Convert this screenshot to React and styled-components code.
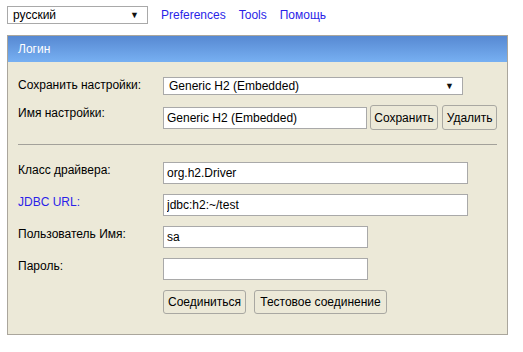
import React from 'react';
import styled, { createGlobalStyle } from 'styled-components';

const GlobalStyle = createGlobalStyle`
    body {
        margin: 0;
        background: #ffffff;
        font-family: "Liberation Sans", Arial, sans-serif;
        font-size: 12px;
        color: #000;
    }
`;

export default function App() {
    return (
        <>
            <GlobalStyle />
            <Page>
                <TopBar>
                    <SelectBox width="141px" height="18px">
                        <span>русский</span>
                        <Caret>▼</Caret>
                    </SelectBox>
                    <Links>
                        <Link>Preferences</Link>
                        <Link>Tools</Link>
                        <Link>Помощь</Link>
                    </Links>
                </TopBar>
                <Panel>
                    <Header>Логин</Header>
                    <Body>
                        <Row>
                            <Label>Сохранить настройки:</Label>
                            <SelectBox width="300px" height="18px">
                                <span>Generic H2 (Embedded)</span>
                                <Caret>▼</Caret>
                            </SelectBox>
                        </Row>
                        <Row top="10px">
                            <Label>Имя настройки:</Label>
                            <Input width="205px" shift="2px" defaultValue="Generic H2 (Embedded)" />
                            <Button left="3px" width="69px">Сохранить</Button>
                            <Button left="4px" width="55px">Удалить</Button>
                        </Row>
                        <Divider />
                        <Row>
                            <Label>Класс драйвера:</Label>
                            <Input width="305px" defaultValue="org.h2.Driver" />
                        </Row>
                        <Row top="10px">
                            <Label link>JDBC URL:</Label>
                            <Input width="305px" defaultValue="jdbc:h2:~/test" />
                        </Row>
                        <Row top="10px">
                            <Label>Пользователь Имя:</Label>
                            <Input width="205px" defaultValue="sa" />
                        </Row>
                        <Row top="10px">
                            <Label>Пароль:</Label>
                            <Input width="205px" type="password" defaultValue="" />
                        </Row>
                        <Row top="10px">
                            <Label />
                            <Button width="83px" tall>Соединиться</Button>
                            <Button left="8px" width="133px" tall>Тестовое соединение</Button>
                        </Row>
                    </Body>
                </Panel>
            </Page>
        </>
    );
}

const Page = styled.div`
    padding: 6px 7px 0;
    width: 501px;
`;

const TopBar = styled.div`
    display: flex;
    align-items: center;
    height: 18px;
`;

const Links = styled.div`
    display: flex;
    gap: 13px;
    margin-left: 13px;
`;

const Link = styled.a`
    color: #2b1fe8;
    text-decoration: none;
    cursor: pointer;
`;

const SelectBox = styled.div`
    box-sizing: border-box;
    width: ${p => p.width};
    height: ${p => p.height};
    display: flex;
    align-items: center;
    justify-content: space-between;
    padding: 0 8px 0 5px;
    background: #fff;
    border: 1px solid #a9a9a9;
`;

const Caret = styled.span`
    font-size: 9px;
    line-height: 1;
    color: #111;
`;

const Panel = styled.div`
    margin-top: 11px;
    border: 1px solid #aaa69c;
    background: #ece9d8;
`;

const Header = styled.div`
    height: 26px;
    line-height: 26px;
    padding-left: 10px;
    color: #fff;
    background: linear-gradient(to bottom, #5789d2, #77b0f2);
`;

const Body = styled.div`
    padding: 15px 10px 20px;
`;

const Row = styled.div`
    display: flex;
    align-items: flex-start;
    margin-top: ${p => p.top || '0'};
`;

const Label = styled.div`
    flex: 0 0 145px;
    padding-top: 1px;
    line-height: 14px;
    color: ${p => (p.link ? '#2b1fe8' : '#000')};
`;

const Input = styled.input`
    box-sizing: border-box;
    width: ${p => p.width};
    height: 22px;
    margin: ${p => p.shift || '0'} 0 0;
    padding: 0 3px;
    border: 1px solid #a9a9a9;
    background: #fff;
    font: inherit;
    color: #000;
    outline: none;
`;

const Button = styled.button`
    box-sizing: border-box;
    width: ${p => p.width};
    height: ${p => (p.tall ? '24px' : '25px')};
    margin-left: ${p => p.left || '0'};
    padding: 0;
    border: 1px solid #a9a8a2;
    border-radius: 3px;
    background: #ece9d8;
    font: inherit;
    color: #000;
`;

const Divider = styled.div`
    height: 1px;
    background: #a3a19a;
    margin: 14px 0 17px;
`;
